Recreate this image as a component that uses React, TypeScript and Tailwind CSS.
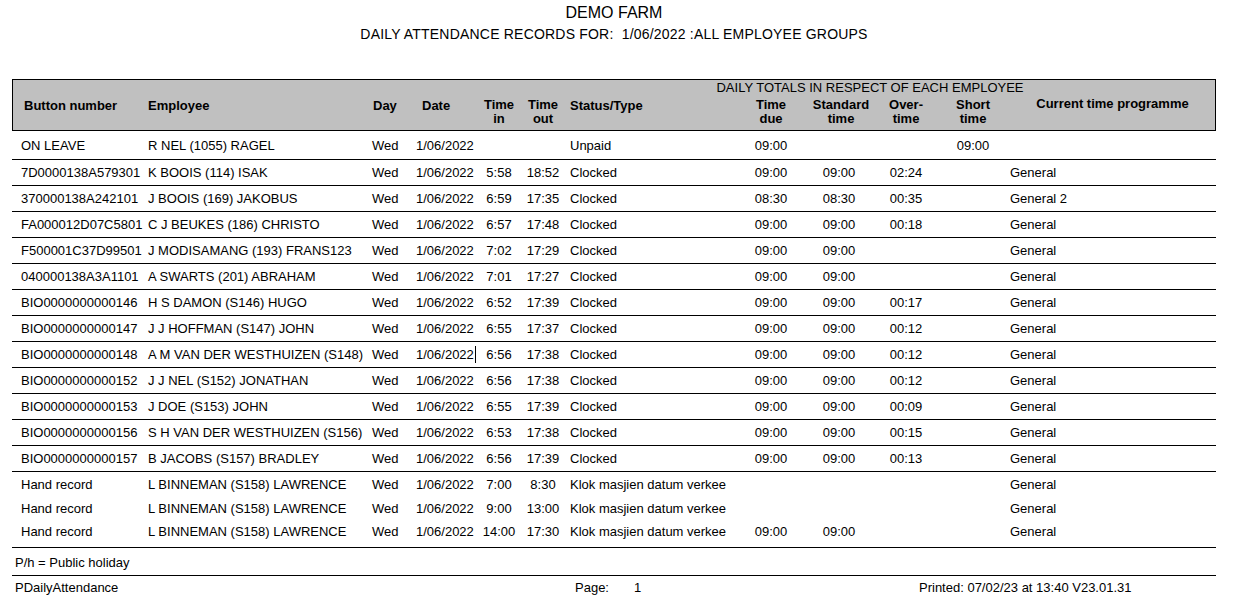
import React from 'react';

interface Rec {
  button: string;
  employee: string;
  date: string;
  timeIn: string;
  timeOut: string;
  status: string;
  due: string;
  std: string;
  over: string;
  short: string;
  prog: string;
  cursor?: boolean;
}

const cols = 'grid grid-cols-[135px_224px_44px_60px_46px_42px_176px_62px_74px_60px_74px_205px]';

const clocked: Rec[] = [
  { button: 'ON LEAVE', employee: 'R NEL (1055) RAGEL', date: '1/06/2022', timeIn: '', timeOut: '', status: 'Unpaid', due: '09:00', std: '', over: '', short: '09:00', prog: '' },
  { button: '7D0000138A579301', employee: 'K BOOIS (114) ISAK', date: '1/06/2022', timeIn: '5:58', timeOut: '18:52', status: 'Clocked', due: '09:00', std: '09:00', over: '02:24', short: '', prog: 'General' },
  { button: '370000138A242101', employee: 'J BOOIS (169) JAKOBUS', date: '1/06/2022', timeIn: '6:59', timeOut: '17:35', status: 'Clocked', due: '08:30', std: '08:30', over: '00:35', short: '', prog: 'General 2' },
  { button: 'FA000012D07C5801', employee: 'C J BEUKES (186) CHRISTO', date: '1/06/2022', timeIn: '6:57', timeOut: '17:48', status: 'Clocked', due: '09:00', std: '09:00', over: '00:18', short: '', prog: 'General' },
  { button: 'F500001C37D99501', employee: 'J MODISAMANG (193) FRANS123', date: '1/06/2022', timeIn: '7:02', timeOut: '17:29', status: 'Clocked', due: '09:00', std: '09:00', over: '', short: '', prog: 'General' },
  { button: '040000138A3A1101', employee: 'A SWARTS (201) ABRAHAM', date: '1/06/2022', timeIn: '7:01', timeOut: '17:27', status: 'Clocked', due: '09:00', std: '09:00', over: '', short: '', prog: 'General' },
  { button: 'BIO0000000000146', employee: 'H S DAMON (S146) HUGO', date: '1/06/2022', timeIn: '6:52', timeOut: '17:39', status: 'Clocked', due: '09:00', std: '09:00', over: '00:17', short: '', prog: 'General' },
  { button: 'BIO0000000000147', employee: 'J J HOFFMAN (S147) JOHN', date: '1/06/2022', timeIn: '6:55', timeOut: '17:37', status: 'Clocked', due: '09:00', std: '09:00', over: '00:12', short: '', prog: 'General' },
  { button: 'BIO0000000000148', employee: 'A M VAN DER WESTHUIZEN (S148)', date: '1/06/2022', timeIn: '6:56', timeOut: '17:38', status: 'Clocked', due: '09:00', std: '09:00', over: '00:12', short: '', prog: 'General', cursor: true },
  { button: 'BIO0000000000152', employee: 'J J NEL (S152) JONATHAN', date: '1/06/2022', timeIn: '6:56', timeOut: '17:38', status: 'Clocked', due: '09:00', std: '09:00', over: '00:12', short: '', prog: 'General' },
  { button: 'BIO0000000000153', employee: 'J DOE (S153) JOHN', date: '1/06/2022', timeIn: '6:55', timeOut: '17:39', status: 'Clocked', due: '09:00', std: '09:00', over: '00:09', short: '', prog: 'General' },
  { button: 'BIO0000000000156', employee: 'S H VAN DER WESTHUIZEN (S156)', date: '1/06/2022', timeIn: '6:53', timeOut: '17:38', status: 'Clocked', due: '09:00', std: '09:00', over: '00:15', short: '', prog: 'General' },
  { button: 'BIO0000000000157', employee: 'B JACOBS (S157) BRADLEY', date: '1/06/2022', timeIn: '6:56', timeOut: '17:39', status: 'Clocked', due: '09:00', std: '09:00', over: '00:13', short: '', prog: 'General' },
];

const hand: Rec[] = [
  { button: 'Hand record', employee: 'L BINNEMAN (S158) LAWRENCE', date: '1/06/2022', timeIn: '7:00', timeOut: '8:30', status: 'Klok masjien datum verkee', due: '', std: '', over: '', short: '', prog: 'General' },
  { button: 'Hand record', employee: 'L BINNEMAN (S158) LAWRENCE', date: '1/06/2022', timeIn: '9:00', timeOut: '13:00', status: 'Klok masjien datum verkee', due: '', std: '', over: '', short: '', prog: 'General' },
  { button: 'Hand record', employee: 'L BINNEMAN (S158) LAWRENCE', date: '1/06/2022', timeIn: '14:00', timeOut: '17:30', status: 'Klok masjien datum verkee', due: '09:00', std: '09:00', over: '', short: '', prog: 'General' },
];

function Cells({ r }: { r: Rec }) {
  return (
    <>
      <div className="pl-[8px]">{r.button}</div>
      <div className="whitespace-nowrap">{r.employee}</div>
      <div>Wed</div>
      <div className="flex items-center">
        <span>{r.date}</span>
        {r.cursor && <span className="ml-[1px] inline-block w-px h-[17px] bg-black" />}
      </div>
      <div className="text-center">{r.timeIn}</div>
      <div className="text-center">{r.timeOut}</div>
      <div className="pl-[6px]">{r.status}</div>
      <div className="text-center">{r.due}</div>
      <div className="text-center">{r.std}</div>
      <div className="text-center">{r.over}</div>
      <div className="text-center">{r.short}</div>
      <div>{r.prog}</div>
    </>
  );
}

export default function App() {
  return (
    <div className="w-[1239px] h-[611px] bg-white text-black text-[13px] leading-[15px] font-['Liberation_Sans',Arial,sans-serif] overflow-hidden">
      <div className="ml-[12px] w-[1204px]">
        <div className="pt-[4px] text-center">
          <div className="text-[16px] leading-[18px]">DEMO FARM</div>
          <div className="mt-[5px] whitespace-pre text-[14px] leading-[15px] tracking-[0.2px]">
            DAILY ATTENDANCE RECORDS FOR:  1/06/2022 :ALL EMPLOYEE GROUPS
          </div>
        </div>

        <div className="mt-[37px] border border-black bg-[#c0c0c0] h-[52px] font-bold">
          <div className={`${cols} h-[18px]`}>
            <div className="col-start-8 col-span-4 flex justify-center mr-[10px] font-normal whitespace-nowrap">
              DAILY TOTALS IN RESPECT OF EACH EMPLOYEE
            </div>
          </div>
          <div className={`${cols} leading-[14px]`}>
            <div className="pl-[11px] pt-px">Button number</div>
            <div className="pt-px">Employee</div>
            <div className="pl-px pt-px">Day</div>
            <div className="pl-[6px] pt-px">Date</div>
            <div className="text-center">Time<br />in</div>
            <div className="text-center">Time<br />out</div>
            <div className="pl-[6px] pt-px">Status/Type</div>
            <div className="text-center">Time<br />due</div>
            <div className="text-center pl-[4px]">Standard<br />time</div>
            <div className="text-center">Over-<br />time</div>
            <div className="text-center">Short<br />time</div>
            <div className="text-center -mt-px">Current time programme</div>
          </div>
        </div>

        <div>
          {clocked.map((r, i) => (
            <div
              key={r.button}
              className={`${cols} pl-px items-center border-b border-black ${i === 0 ? 'h-[29px]' : 'h-[26px]'}`}
            >
              <Cells r={r} />
            </div>
          ))}
        </div>

        <div className="h-[76px] pt-px border-b border-black">
          {hand.map((r, i) => (
            <div key={r.timeIn} className={`${cols} pl-px items-center ${i === 1 ? 'h-[24px]' : 'h-[23px]'}`}>
              <Cells r={r} />
            </div>
          ))}
        </div>

        <div className="h-[28px] flex items-center pl-[3px] pt-[2px] border-b border-black">P/h = Public holiday</div>

        <div className="flex items-center h-[22px] pl-[3px]">
          <div className="w-[560px]">PDailyAttendance</div>
          <div className="w-[59px]">Page:</div>
          <div className="w-[285px]">1</div>
          <div>Printed: 07/02/23 at 13:40 V23.01.31</div>
        </div>
      </div>
    </div>
  );
}
